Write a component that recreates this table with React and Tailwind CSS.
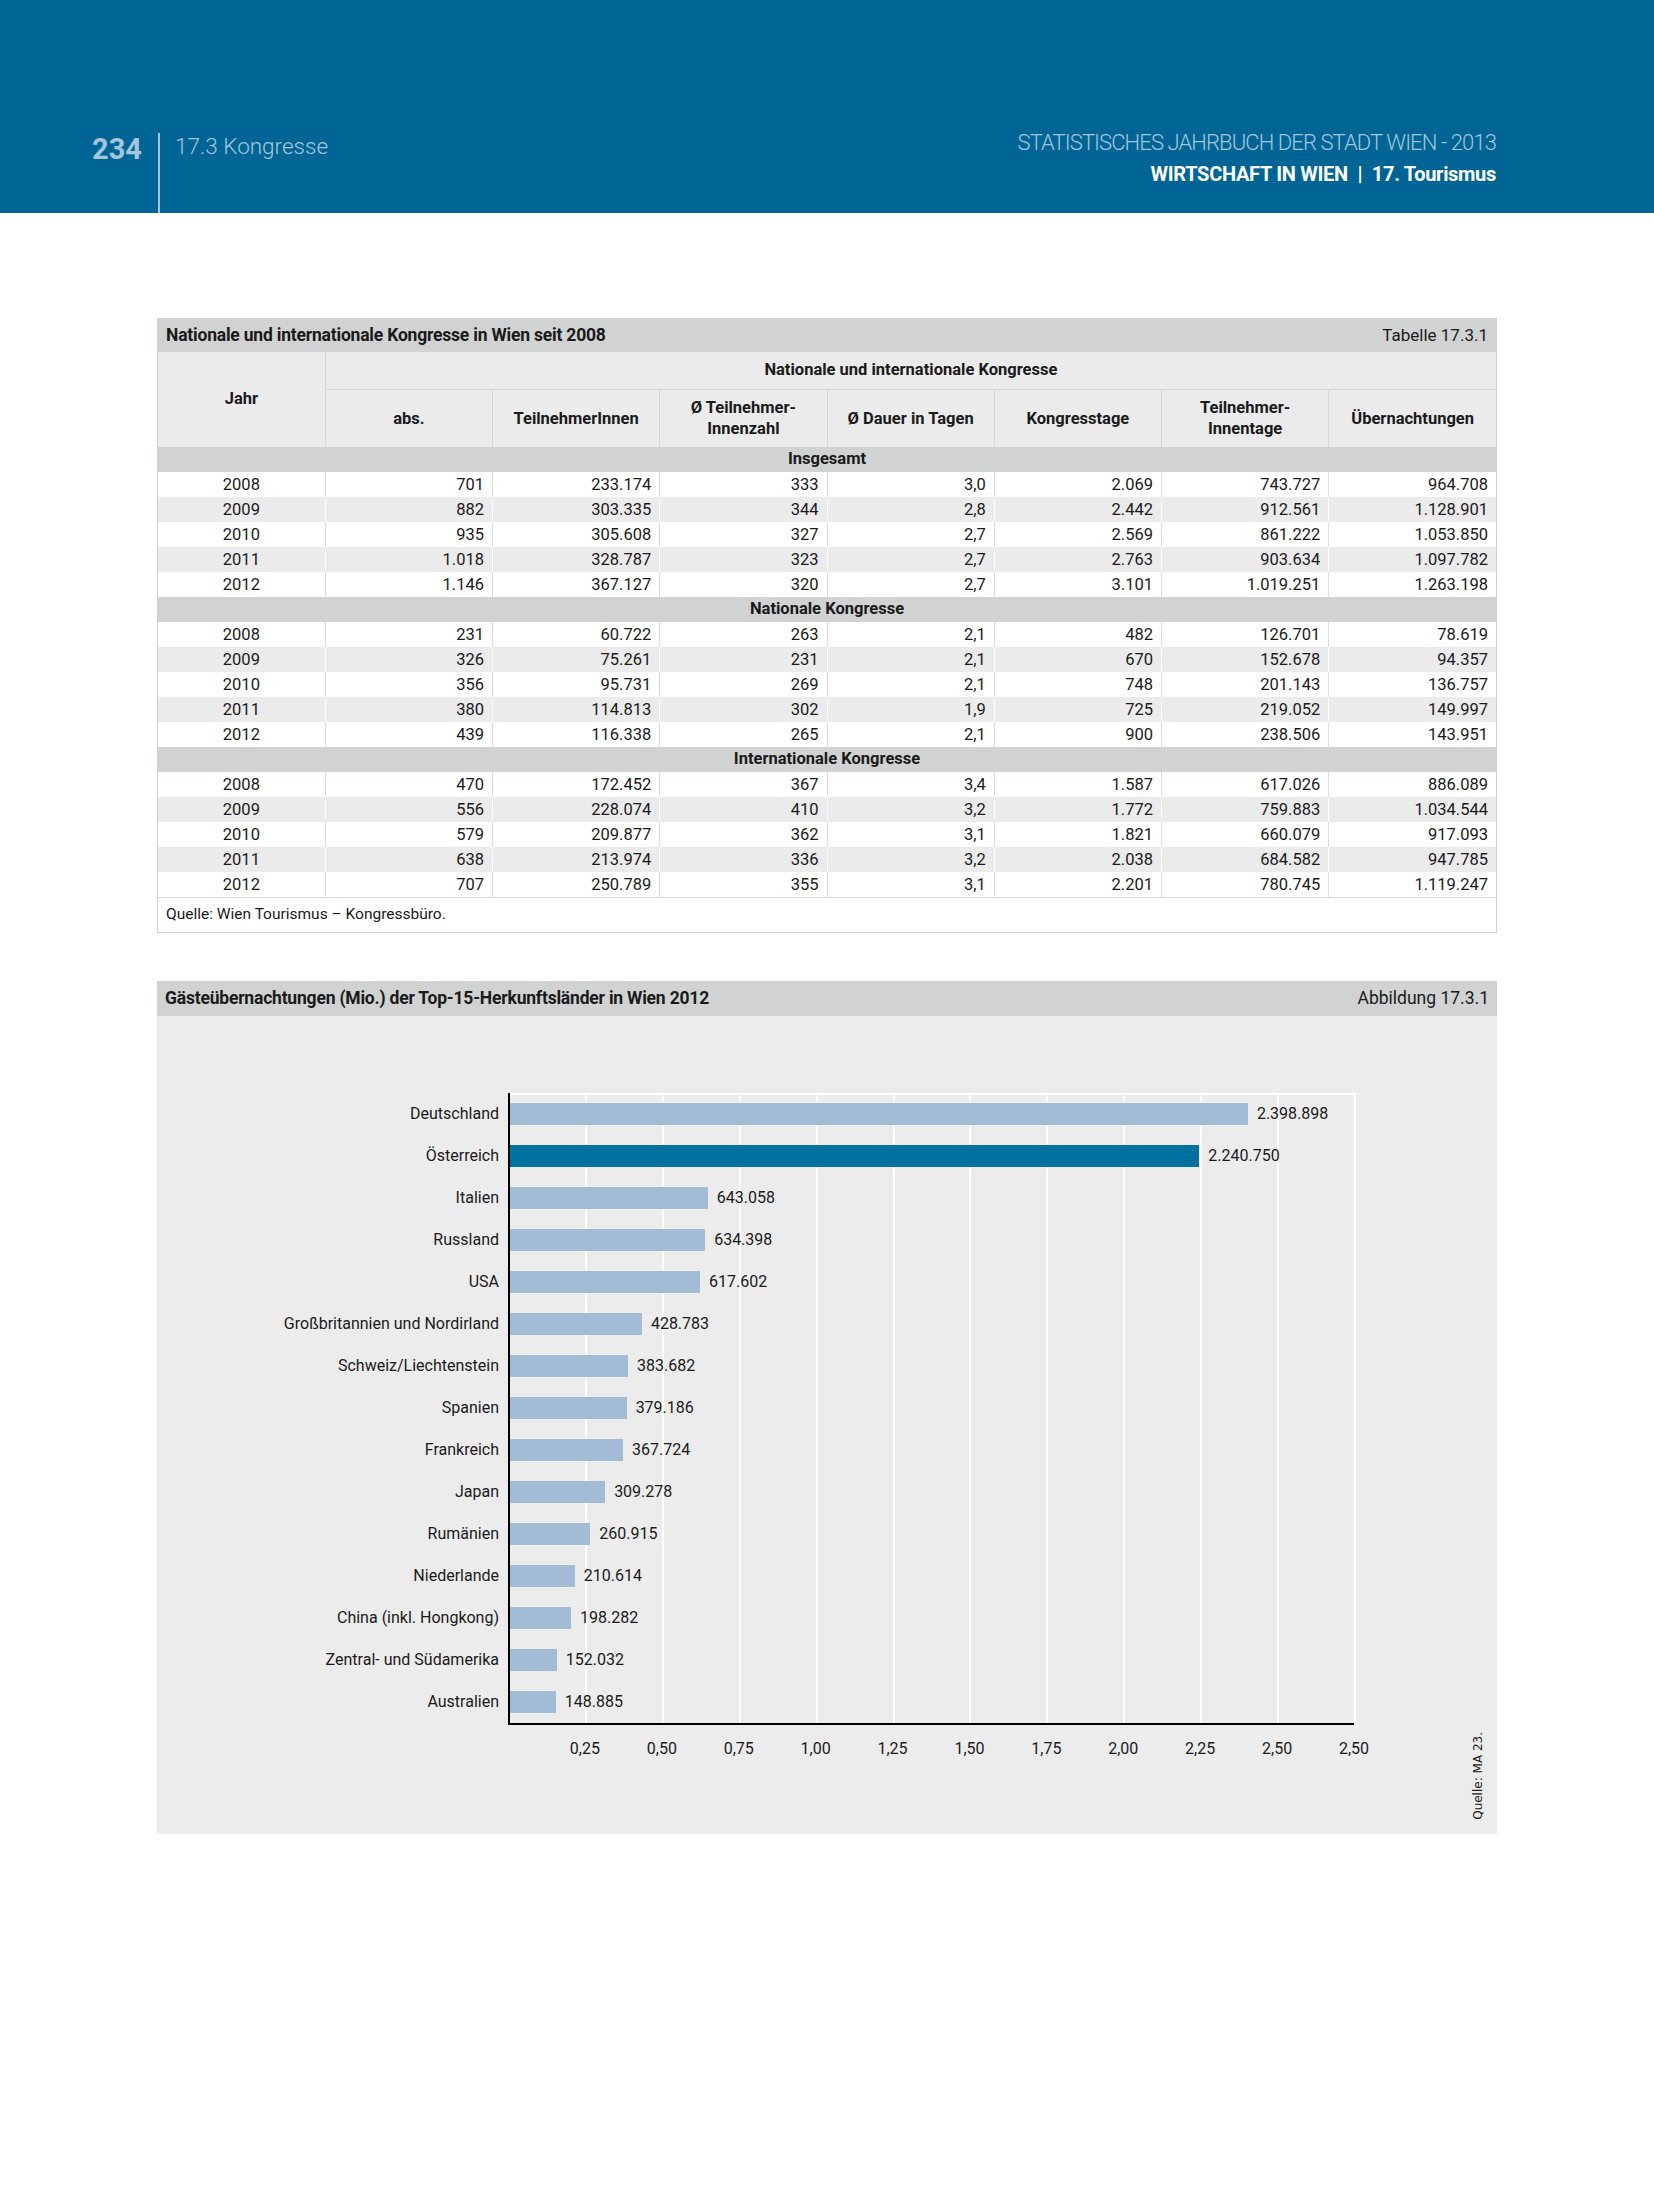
import React from 'react';

const font = "font-['Roboto','Liberation_Sans',sans-serif]";

const sections = [
    {
        title: 'Insgesamt',
        rows: [
            ['2008', '701', '233.174', '333', '3,0', '2.069', '743.727', '964.708'],
            ['2009', '882', '303.335', '344', '2,8', '2.442', '912.561', '1.128.901'],
            ['2010', '935', '305.608', '327', '2,7', '2.569', '861.222', '1.053.850'],
            ['2011', '1.018', '328.787', '323', '2,7', '2.763', '903.634', '1.097.782'],
            ['2012', '1.146', '367.127', '320', '2,7', '3.101', '1.019.251', '1.263.198'],
        ],
    },
    {
        title: 'Nationale Kongresse',
        rows: [
            ['2008', '231', '60.722', '263', '2,1', '482', '126.701', '78.619'],
            ['2009', '326', '75.261', '231', '2,1', '670', '152.678', '94.357'],
            ['2010', '356', '95.731', '269', '2,1', '748', '201.143', '136.757'],
            ['2011', '380', '114.813', '302', '1,9', '725', '219.052', '149.997'],
            ['2012', '439', '116.338', '265', '2,1', '900', '238.506', '143.951'],
        ],
    },
    {
        title: 'Internationale Kongresse',
        rows: [
            ['2008', '470', '172.452', '367', '3,4', '1.587', '617.026', '886.089'],
            ['2009', '556', '228.074', '410', '3,2', '1.772', '759.883', '1.034.544'],
            ['2010', '579', '209.877', '362', '3,1', '1.821', '660.079', '917.093'],
            ['2011', '638', '213.974', '336', '3,2', '2.038', '684.582', '947.785'],
            ['2012', '707', '250.789', '355', '3,1', '2.201', '780.745', '1.119.247'],
        ],
    },
];

const countries = [
    ['Deutschland', 2.398898, '2.398.898'],
    ['Österreich', 2.24075, '2.240.750', true],
    ['Italien', 0.643058, '643.058'],
    ['Russland', 0.634398, '634.398'],
    ['USA', 0.617602, '617.602'],
    ['Großbritannien und Nordirland', 0.428783, '428.783'],
    ['Schweiz/Liechtenstein', 0.383682, '383.682'],
    ['Spanien', 0.379186, '379.186'],
    ['Frankreich', 0.367724, '367.724'],
    ['Japan', 0.309278, '309.278'],
    ['Rumänien', 0.260915, '260.915'],
    ['Niederlande', 0.210614, '210.614'],
    ['China (inkl. Hongkong)', 0.198282, '198.282'],
    ['Zentral- und Südamerika', 0.152032, '152.032'],
    ['Australien', 0.148885, '148.885'],
];

const ticks = ['0,25', '0,50', '0,75', '1,00', '1,25', '1,50', '1,75', '2,00', '2,25', '2,50', '2,50'];

// px per 1 Mio.
const SCALE = 307.6;

const App = () => {
    return (
        <div className={`w-[1654px] min-h-[2205px] bg-white text-[#1a1a1a] ${font}`}>
            {/* Kopfzeile */}
            <header className="flex h-[213px] justify-between bg-[#006595]">
                <div className="flex items-start pl-[92px] pt-[133px]">
                    <span className="mt-[2px] text-[29px] font-bold leading-none text-[#a3c6de]">234</span>
                    <div className="ml-[16px] w-[2px] self-stretch bg-[#a3c6de]" />
                    <span className="ml-[15px] mt-[2px] text-[22.5px] font-light leading-none text-[#a3c6de]">17.3 Kongresse</span>
                </div>
                <div className="pr-[158px] pt-[130px] text-right">
                    <div className="text-[22px] font-light leading-[26px] tracking-[-0.9px] text-[#a3c6de]">
                        STATISTISCHES JAHRBUCH DER STADT WIEN - 2013
                    </div>
                    <div className="mt-[6px] text-[20px] font-bold leading-[24px] tracking-[-0.3px] text-white">
                        WIRTSCHAFT IN WIEN <span className="mx-[5px]">|</span> 17. Tourismus
                    </div>
                </div>
            </header>

            {/* Tabelle */}
            <section className="mx-[157px] mt-[105px] border border-[#cfd0d0]">
                <div className="flex h-[33px] items-center justify-between bg-[#d1d2d2] px-[8px]">
                    <span className="text-[17.5px] font-bold tracking-[-0.2px]">Nationale und internationale Kongresse in Wien seit 2008</span>
                    <span className="text-[17px]">Tabelle 17.3.1</span>
                </div>
                <table className="w-full table-fixed border-collapse text-[16.5px]">
                    <thead className="bg-[#ebebeb] font-bold">
                        <tr className="h-[37px]">
                            <th rowSpan={2} className="border-r border-[#d6d6d6] font-bold">Jahr</th>
                            <th colSpan={7} className="border-b border-[#d6d6d6] font-bold">Nationale und internationale Kongresse</th>
                        </tr>
                        <tr className="h-[58px] leading-[21px]">
                            <th className="border-r border-[#d6d6d6] font-bold">abs.</th>
                            <th className="border-r border-[#d6d6d6] font-bold">TeilnehmerInnen</th>
                            <th className="border-r border-[#d6d6d6] font-bold">Ø Teilnehmer-<br />Innenzahl</th>
                            <th className="border-r border-[#d6d6d6] font-bold">Ø Dauer in Tagen</th>
                            <th className="border-r border-[#d6d6d6] font-bold">Kongresstage</th>
                            <th className="border-r border-[#d6d6d6] font-bold">Teilnehmer-<br />Innentage</th>
                            <th className="font-bold">Übernachtungen</th>
                        </tr>
                    </thead>
                    <tbody>
                        {sections.map((section) => (
                            <React.Fragment key={section.title}>
                                <tr className="h-[25px] bg-[#d1d2d2]">
                                    <td colSpan={8} className="text-center font-bold">{section.title}</td>
                                </tr>
                                {section.rows.map((row, i) => (
                                    <tr key={row[0]} className={`h-[25px] ${i % 2 === 1 ? 'bg-[#ebebeb]' : 'bg-white'}`}>
                                        {row.map((cell, j) => (
                                            <td
                                                key={j}
                                                className={`py-0 leading-[25px] ${j === 0 ? 'text-center' : 'pr-[8px] text-right'} ${j < 7 ? (i % 2 === 1 ? 'border-r border-white' : 'border-r border-[#dcdcdc]') : ''}`}
                                            >
                                                {cell}
                                            </td>
                                        ))}
                                    </tr>
                                ))}
                            </React.Fragment>
                        ))}
                        <tr className="h-[34px] border-t border-[#d6d6d6]">
                            <td colSpan={8} className="px-[8px] text-[15.5px]">Quelle: Wien Tourismus – Kongressbüro.</td>
                        </tr>
                    </tbody>
                </table>
            </section>

            {/* Abbildung */}
            <section className="mx-[157px] mt-[48px] bg-[#ececec]">
                <div className="flex h-[35px] items-center justify-between bg-[#d1d2d2] px-[8px]">
                    <span className="text-[17.5px] font-bold tracking-[-0.2px]">Gästeübernachtungen (Mio.) der Top-15-Herkunftsländer in Wien 2012</span>
                    <span className="text-[17.5px]">Abbildung 17.3.1</span>
                </div>
                <div className="flex h-[818px] pt-[77px] text-[16px]">
                    <div className="w-[351px] pr-[9px] text-right">
                        {countries.map(([name]) => (
                            <div key={name} className="flex h-[42px] items-center justify-end">{name}</div>
                        ))}
                    </div>
                    <div className="w-[846px]">
                        <div className="relative border-b-2 border-l-2 border-black">
                            {/* Gitterlinien */}
                            <div className="absolute inset-x-0 top-0 h-[2px] bg-white" />
                            {ticks.map((t, k) => (
                                <div
                                    key={k}
                                    className="absolute top-0 bottom-0 w-[2px] bg-white"
                                    style={{ left: (k + 1) * 76.9 - 2 }}
                                />
                            ))}
                            <div className="relative">
                                {countries.map(([name, value, label, dark]) => (
                                    <div key={name} className="flex h-[42px] items-center">
                                        <div
                                            className={`h-[22px] ${dark ? 'bg-[#00719f]' : 'bg-[#a3bcd6]'}`}
                                            style={{ width: value * SCALE }}
                                        />
                                        <span className="ml-[9px]">{label}</span>
                                    </div>
                                ))}
                            </div>
                        </div>
                        <div className="mt-[12px] grid grid-cols-11">
                            {ticks.map((t, k) => (
                                <div key={k} className="flex justify-end">
                                    <span className="translate-x-1/2">{t}</span>
                                </div>
                            ))}
                        </div>
                    </div>
                    <div className="flex flex-1 items-end justify-end pb-[14px] pr-[10px]">
                        <span className="rotate-180 text-[12px] [writing-mode:vertical-rl] font-['DejaVu_Sans',sans-serif]">Quelle: MA 23.</span>
                    </div>
                </div>
            </section>
        </div>
    );
};

export default App;
